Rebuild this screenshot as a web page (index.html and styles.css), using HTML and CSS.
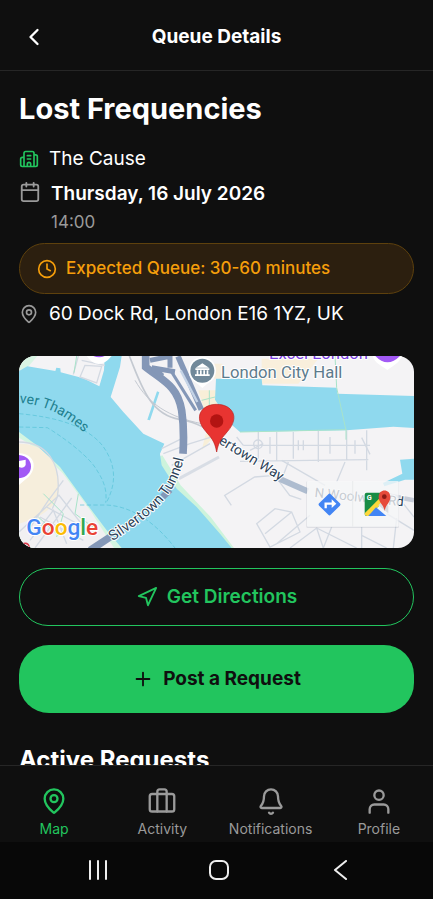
FILE: index.html
```html
<!DOCTYPE html>
<html lang="en">
<head>
    <meta charset="UTF-8">
    <meta name="viewport" content="width=device-width, initial-scale=1.0">
    <title>Queue Details</title>
    <link rel="stylesheet" href="styles.css">
</head>
<body>
    <header class="app-header">
        <button class="back-btn" aria-label="Back">
            <svg class="icon icon-lg" viewBox="0 0 24 24"><path d="M15 18l-6-6 6-6"/></svg>
        </button>
        <h1>Queue Details</h1>
    </header>

    <main class="content">
        <h2 class="event-title">Lost Frequencies</h2>

        <div class="info-row venue">
            <svg class="icon icon-sm" viewBox="0 0 24 24"><path d="M10 12h4M10 8h4M14 21v-3a2 2 0 0 0-4 0v3M6 10H4a2 2 0 0 0-2 2v7a2 2 0 0 0 2 2h16a2 2 0 0 0 2-2V9a2 2 0 0 0-2-2h-2M6 21V5a2 2 0 0 1 2-2h8a2 2 0 0 1 2 2v16"/></svg>
            <span>The Cause</span>
        </div>

        <div class="info-row date">
            <svg class="icon icon-md" viewBox="0 0 24 24"><rect x="3" y="4" width="18" height="18" rx="2"/><path d="M16 2v4M8 2v4M3 10h18"/></svg>
            <div>
                <p class="date-day">Thursday, 16 July 2026</p>
                <p class="date-time">14:00</p>
            </div>
        </div>

        <div class="queue-badge">
            <svg class="icon icon-sm" viewBox="0 0 24 24"><circle cx="12" cy="12" r="10"/><path d="M12 6v6l4 2"/></svg>
            <span>Expected Queue: 30-60 minutes</span>
        </div>

        <div class="info-row address">
            <svg class="icon icon-sm" viewBox="0 0 24 24"><path d="M20 10c0 4.99-5.54 10.19-7.4 11.8a1 1 0 0 1-1.2 0C9.54 20.19 4 14.99 4 10a8 8 0 0 1 16 0"/><circle cx="12" cy="10" r="3"/></svg>
            <span>60 Dock Rd, London E16 1YZ, UK</span>
        </div>

        <div class="map">
            <svg class="map-canvas" viewBox="27 17 1185 576" preserveAspectRatio="xMidYMid slice">
                <rect x="27" y="17" width="1185" height="576" fill="#f4f3f5"/>

                <!-- land and parks -->
                <path d="M27 230l60 45 70 70 90 125 100 123H27z" fill="#d3f5e1"/>
                <path d="M27 262l50 30 80 75 85 115 70 111H27z" fill="#f1f0f2"/>
                <path d="M27 280c70 0 110 40 120 110 6 60-20 100-120 130z" fill="#f6eedc"/>
                <path d="M27 17h55l-30 35-25 8z" fill="#d9f5e4"/>
                <path d="M565 120h55v80l-10 60-35 40 20-80z" fill="#f8efd8"/>
                <path d="M755 25h170l-60 75H755zM612 40h25v45h-25z" fill="#f9efdc"/>
                <path d="M445 320l12-5 55 90 90 95 70 93h-20L480 430z" fill="#cdf3dc"/>

                <!-- water -->
                <g fill="#8fd9ee">
                    <path d="M27 62l25-14 84 14 3-10 12 2 1 12 68 18 48 24 14-48 2-43h51l-5 33-28 90 38 45 60 65 63 30-13 30 5 35 45 70 60 55 70 80 35 43H335l-45-53-60-80-80-110-70-65-53-40z"/>
                    <path d="M618 85h137l2 20 223 7 2 18 230 7v96l-62-4-140 11-320 5-25-22-50-75z"/>
                    <path d="M1170 328l42-3v63h-27l-62 20-4-10 58-28z"/>
                    <path d="M441 123l7 3-28 84-8-2z"/>
                </g>
                <g fill="none" stroke="#55c1d6" stroke-width="2" stroke-dasharray="13 7">
                    <path d="M27 190c110 10 200 35 250 95 40 55 45 110 12 172"/>
                    <path d="M27 230l85 2c50 30 130 90 150 130 20 30 30 60 25 95"/>
                    <path d="M210 464h80c90 5 160 70 205 129"/>
                </g>

                <!-- minor streets -->
                <g fill="none" stroke="#d3d9e2" stroke-width="4">
                    <path d="M205 17l-15 55M215 30l70 15M225 45l-15 35 50 18 15-50z"/>
                    <path d="M27 275c80 0 130 60 115 165l-15 35M160 390l-45 60-60 90M27 545l120-110 95 120M75 593l110-150M90 500l130 70M110 470l110 60M60 570l70-90 40 100"/>
                    <path d="M460 310l80-30 80-25M485 345l115-65M455 295l60-30"/>
                    <path d="M700 285h380M690 333l385-5M745 245v80M800 245v85M850 245v80M925 240v95M1010 240v90M1070 240v120"/>
                    <path d="M680 260l20 25M780 260v50M865 270v30M880 270v30M960 260v50M1035 270v40M1055 262l25 50M720 300l40-20"/>
                    <circle cx="744" cy="282" r="13"/>
                    <path d="M664 465l-20-30 90-55 60-5 45 60 35 12M815 330l130 75M835 335l-15 40M1005 335l-25 60"/>
                    <path d="M740 520l55-45 50 10 25 60-90 45zM765 550l80-65M800 580l100-85M840 593l80-60 20 60M920 533l120 60M965 530l-25 63M1055 530v63M1055 555l75 38M1130 490l82 50M1150 593l10-90M1180 460l32 40"/>
                </g>
                <g fill="none" stroke="#a8e3c9" stroke-width="3">
                    <path d="M975 17l5 95 28 128v28M690 245l320-7M85 500l60 55M205 430l-10 60 60 45M100 430l60 60-20 70M575 150l40-10M580 175h40M598 120v80M200 17l-8 50"/>
                </g>
                <path d="M1110 430l102 20" fill="none" stroke="#c6ccd8" stroke-width="14"/>

                <!-- railway -->
                <g fill="none" stroke="#c4c9d1" stroke-width="5">
                    <path d="M358 17c35 85 60 175 150 190 60 10 90 30 110 60"/>
                    <path d="M375 90c40 70 100 110 200 130" stroke-width="3"/>
                    <path d="M507 385l120-65" stroke="#d8dde5" stroke-width="9"/>
                </g>

                <!-- main roads -->
                <g fill="none" stroke="#8497b7">
                    <path d="M407 10v40c50 40 95 55 108 130 6 40 7 80 4 130" stroke-width="23"/>
                    <path d="M420 30l60-12M425 52l70 12M480 17v35M430 55l28 22" stroke-width="15"/>
                    <path d="M482 60l75 120" stroke-width="9"/>
                    <path d="M504 18l70 160" stroke-width="17"/>
                    <path d="M512 60l50 95" stroke="#c4d3e6" stroke-width="7"/>
                    <path d="M240 600l65-43" stroke-width="22"/>
                    <path d="M458 440l22-22" stroke-width="20"/>
                </g>
                <path d="M808 385l85 38" fill="none" stroke="#aebccf" stroke-width="18"/>

                <!-- labels -->
                <path id="thames" d="M-8 159c90-7 175 27 250 108" fill="none"/>
                <path id="tunnel" d="M308 573C420 495 510 440 527 290" fill="none"/>
                <path id="way" d="M624 278l210 129" fill="none"/>
                <g class="map-labels">
                    <text font-size="42" fill="#21808f" stroke="none"><textPath href="#thames">River Thames</textPath></text>
                    <text font-size="43"><textPath href="#tunnel">Silvertown Tunnel</textPath></text>
                    <text font-size="42"><textPath href="#way">ertown Way</textPath></text>
                    <text x="633" y="83" font-size="50" fill="#5d7b8c">London City Hall</text>
                    <text x="777" y="26" font-size="50" fill="#7a3fe0">Excel London</text>
                    <text x="913" y="440" font-size="40" transform="rotate(6 913 440)">N Woolwich Rd</text>
                </g>

                <!-- place markers -->
                <path d="M545 85l32 28 32-28z" fill="#fff"/>
                <circle cx="577" cy="61" r="41" fill="#fff"/>
                <circle cx="577" cy="61" r="36" fill="#71899a"/>
                <path d="M557 52l20-13 20 13zM556 54h42v5h-42zM560 60h5v12h-5zM570 60h5v12h-5zM580 60h5v12h-5zM590 60h5v12h-5zM555 72h44v5h-44z" fill="#fff"/>
                <path d="M230 17q35 48 75 0zM1088 17c5 20 25 28 44 42 20-14 35-22 45-42z" fill="#fff"/>
                <path d="M250 17q18 8 34 0zM1096 17q36 38 74 0z" fill="#a259f5"/>
                <path d="M27 309c55 2 55 55 20 78l-20 17z" fill="#fff"/>
                <path d="M27 314c48 3 48 65 0 70z" fill="#a259f5"/>
                <path d="M27 332l20-4v16q-5 12-20 6z" fill="#fff"/>
                <circle cx="46" cy="590" r="11" fill="none" stroke="#d93a4a" stroke-width="5"/>

                <!-- venue pin -->
                <path d="M620 305c-6-34-17-43-32-61-41-46-12-82 32-82s73 36 32 82c-15 18-26 27-32 61z" fill="#e83431" stroke="#b9211f" stroke-width="2"/>
                <circle cx="620" cy="212" r="20" fill="#b31412"/>

                <text class="map-logo" x="49" y="553"><tspan fill="#4285f4">G</tspan><tspan fill="#ea4335">o</tspan><tspan fill="#fbbc05">o</tspan><tspan fill="#4285f4">g</tspan><tspan fill="#34a853">l</tspan><tspan fill="#ea4335">e</tspan></text>

                <!-- map toolbar -->
                <rect x="889" y="393" width="278" height="140" rx="4" fill="#8891a0" opacity=".2"/>
                <rect x="891" y="392" width="275" height="137" rx="3" fill="#fff" opacity=".7"/>
                <path d="M1028 392v137" stroke="#e3e5e9" stroke-width="2"/>
                <rect x="934" y="438" width="49" height="49" rx="5" transform="rotate(45 958.5 462.5)" fill="#4285f4"/>
                <path d="M947 474v-14h21" fill="none" stroke="#fff" stroke-width="7"/>
                <path d="M965 447l14 13-14 13z" fill="#fff"/>
                <path d="M1070 427h62v16l-57 54h-5q-6 0-6-6v-58q0-6 6-6z" fill="#188d45"/>
                <path d="M1064 489l55-56 10 12-53 52q-12 2-12-8z" fill="#fdd83c"/>
                <path d="M1075 497l23-26 31 26z" fill="#4285f4"/>
                <path d="M1105 465l18-18 12 20v22z" fill="#dadce0"/>
                <text x="1070" y="450" font-size="22" font-weight="700" fill="#fff">G</text>
                <path d="M1124 482c-3-20-18-24-18-42 0-26 35-26 35 0 0 18-14 22-17 42z" fill="#e64a3b"/>
                <circle cx="1123" cy="439" r="7" fill="#8c1b16"/>
            </svg>
        </div>

        <button class="btn btn-outline">
            <svg class="icon icon-md" viewBox="0 0 24 24"><path d="M3 11l19-9-9 19-2-8-8-2z"/></svg>
            Get Directions
        </button>
        <button class="btn btn-primary">
            <svg class="icon icon-md" viewBox="0 0 24 24"><path d="M5 12h14M12 5v14"/></svg>
            Post a Request
        </button>

        <h3 class="section-title">Active Requests</h3>
    </main>

    <nav class="tab-bar">
        <a href="#" class="tab active">
            <svg class="icon icon-lg" viewBox="0 0 24 24"><path d="M20 10c0 4.99-5.54 10.19-7.4 11.8a1 1 0 0 1-1.2 0C9.54 20.19 4 14.99 4 10a8 8 0 0 1 16 0"/><circle cx="12" cy="10" r="3"/></svg>
            Map
        </a>
        <a href="#" class="tab">
            <svg class="icon icon-lg" viewBox="0 0 24 24"><rect x="1.5" y="6" width="21" height="15" rx="2"/><path d="M16 21V4a2 2 0 0 0-2-2h-4a2 2 0 0 0-2 2v17"/></svg>
            Activity
        </a>
        <a href="#" class="tab">
            <svg class="icon icon-lg" viewBox="0 0 24 24"><path d="M10.3 22a2 2 0 0 0 3.4 0M3.26 16.33A1 1 0 0 0 4 18h16a1 1 0 0 0 .74-1.67C19.41 14.96 18 12.5 18 8A6 6 0 0 0 6 8c0 4.5-1.41 6.96-2.74 8.33"/></svg>
            Notifications
        </a>
        <a href="#" class="tab">
            <svg class="icon icon-lg" viewBox="0 0 24 24"><path d="M20 22v-3a4 4 0 0 0-4-4H8a4 4 0 0 0-4 4v3"/><circle cx="12" cy="7" r="4"/></svg>
            Profile
        </a>
    </nav>

    <div class="system-bar">
        <button aria-label="Recent apps"><svg class="icon icon-sm" viewBox="0 0 20 20"><path d="M2 1v18M10 1v18M18 1v18"/></svg></button>
        <button aria-label="Home"><svg class="icon icon-sm" viewBox="0 0 20 20"><rect x="1" y="1" width="18" height="18" rx="6"/></svg></button>
        <button aria-label="System back"><svg class="icon icon-sm" viewBox="0 0 20 20"><path d="M16 1L5 10l11 9"/></svg></button>
    </div>
</body>
</html>
```
FILE: styles.css
```css
:root {
    --bg: #0f0f0f; --border: #262626;
    --green: #22c55e; --amber: #f59e0b;
    --text: #fff; --muted: #9a9a9a;
}
* { box-sizing: border-box; }
body {
    font-family: Inter, "Liberation Sans", sans-serif;
    margin: 0; height: 100vh;
    display: flex; flex-direction: column;
    background-color: var(--bg); color: var(--text);
}
h1, h2, h3, p { margin: 0; }
button { font-family: inherit; cursor: pointer; }

.icon {
    flex: none; display: block; fill: none;
    stroke: currentColor; stroke-width: 2;
    stroke-linecap: round; stroke-linejoin: round;
}
.icon-sm { width: 20px; height: 20px; }
.icon-md { width: 22px; height: 22px; }
.icon-lg { width: 28px; height: 28px; }

.app-header {
    flex: none; display: grid;
    grid-template-columns: 28px 1fr 28px;
    align-items: center;
    padding: 23px 20px 19px;
    border-bottom: 1px solid var(--border);
}
.app-header h1 { font-size: 19px; line-height: 28px; font-weight: 700; text-align: center; }
.back-btn { padding: 0; border: none; background: none; color: var(--text); }

.content {
    flex: 1; min-height: 0; overflow: hidden;
    padding: 20px 19px 0;
}
.event-title { font-size: 29px; line-height: 36px; font-weight: 700; margin-bottom: 19px; }
.info-row { display: flex; font-size: 19px; line-height: 26px; gap: 10px; }
.venue, .address { align-items: center; }
.venue { margin-bottom: 9px; }
.venue .icon { color: var(--green); }
.date { margin-bottom: 6px; }
.date .icon, .address .icon { color: var(--muted); }
.date-day { font-weight: 600; }
.date-time { font-size: 17px; line-height: 30px; color: var(--muted); }
.queue-badge {
    display: flex; align-items: center; gap: 9px;
    padding: 12px 17px; margin-bottom: 7px;
    font-size: 17px; line-height: 25px; font-weight: 500;
    color: var(--amber); background-color: #2c1f0f;
    border: 1px solid #5e410d; border-radius: 26px;
}
.map {
    height: 192px; margin: 29px 0 20px;
    border-radius: 16px; overflow: hidden;
}
.map-canvas { display: block; width: 100%; height: 100%; font-family: Roboto, sans-serif; }
.map-labels { fill: #2c4258; stroke: #fff; stroke-width: 6; stroke-linejoin: round; paint-order: stroke; }
.map-logo { font-size: 68px; font-weight: 500; stroke: #fff; stroke-width: 6; paint-order: stroke; }

.btn {
    width: 100%; display: flex;
    align-items: center; justify-content: center; gap: 9px;
    font-size: 19px; line-height: 24px; font-weight: 600;
    border-radius: 30px;
}
.btn-outline { padding: 16px; margin-bottom: 19px; background: none; color: var(--green); border: 1px solid var(--green); }
.btn-primary { padding: 22px; margin-bottom: 32px; background-color: var(--green); color: var(--bg); border: none; font-weight: 700; }
.section-title { font-size: 24px; line-height: 30px; font-weight: 700; }

.tab-bar {
    flex: none; display: grid; grid-template-columns: repeat(4, 1fr);
    padding: 21px 0 3px; border-top: 1px solid var(--border);
}
.tab {
    display: flex; flex-direction: column; align-items: center; gap: 3px;
    font-size: 14px; line-height: 21px;
    color: var(--muted); text-decoration: none;
}
.tab.active { color: var(--green); }

.system-bar {
    flex: none; display: grid; grid-template-columns: repeat(3, 1fr);
    padding: 18px 32px 19px 37px; background-color: #080808;
}
.system-bar button { display: flex; justify-content: center; padding: 0; border: none; background: none; color: #eee; }
```
